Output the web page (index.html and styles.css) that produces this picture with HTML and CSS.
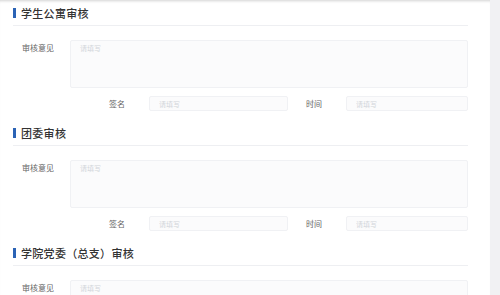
FILE: index.html
```html
<!DOCTYPE html>
<html lang="zh-CN">
<head>
  <meta charset="UTF-8" />
  <meta name="viewport" content="width=device-width, initial-scale=1" />
  <title>审核</title>
  <link rel="stylesheet" href="styles.css">
</head>
<body>
  <div class="panel">

    <section class="audit">
      <div class="audit-head"><span class="bar"></span><h2>学生公寓审核</h2></div>
      <div class="row-opinion">
        <label class="lbl">审核意见</label>
        <textarea class="area" placeholder="请填写"></textarea>
      </div>
      <div class="row-sign">
        <label class="lbl">签名</label>
        <input class="inp inp-name" placeholder="请填写" />
        <label class="lbl">时间</label>
        <input class="inp inp-time" placeholder="请填写" />
      </div>
    </section>

    <section class="audit">
      <div class="audit-head"><span class="bar"></span><h2>团委审核</h2></div>
      <div class="row-opinion">
        <label class="lbl">审核意见</label>
        <textarea class="area" placeholder="请填写"></textarea>
      </div>
      <div class="row-sign">
        <label class="lbl">签名</label>
        <input class="inp inp-name" placeholder="请填写" />
        <label class="lbl">时间</label>
        <input class="inp inp-time" placeholder="请填写" />
      </div>
    </section>

    <section class="audit">
      <div class="audit-head"><span class="bar"></span><h2>学院党委（总支）审核</h2></div>
      <div class="row-opinion">
        <label class="lbl">审核意见</label>
        <textarea class="area" placeholder="请填写"></textarea>
      </div>
    </section>

  </div>
</body>
</html>
```

FILE: styles.css
```css
:root {
  --blue: #2b63b5;
  --line: #eeeff2;
  --field-bg: #fbfbfc;
  --field-border: #f0f1f4;
  --text: #333;
  --label: #666;
  --placeholder: #d2d5da;
  --font-family: "Noto Sans CJK SC", "Noto Sans", sans-serif;
}

* {
  box-sizing: border-box;
}

html, body {
  height: 100%;
}

body {
  margin: 0;
  background: #f1f1f3;
  font-family: var(--font-family);
  overflow: hidden;
}

.panel {
  width: 490px;
  min-height: 100%;
  background: #fff;
  padding: 0 22px 0 13px;
  box-shadow: inset 0 3px 3px -2px rgba(0, 0, 0, 0.18);
}

.audit {
  padding-bottom: 9px;
}

.audit-head {
  display: flex;
  align-items: center;
  height: 26px;
  border-bottom: 1px solid var(--line);
}

.bar {
  width: 3px;
  height: 10px;
  background: var(--blue);
  margin-right: 5px;
}

.audit-head h2 {
  margin: 0;
  font-size: 11px;
  font-weight: 500;
  color: var(--text);
  letter-spacing: 0.3px;
}

.lbl {
  width: 57px;
  padding-right: 7px;
  text-align: center;
  font-size: 8px;
  color: var(--label);
  flex-shrink: 0;
}

.row-opinion {
  display: flex;
  margin-top: 14px;
}

.row-opinion .lbl {
  padding-top: 2px;
}

.area {
  width: 398px;
  height: 48px;
  resize: none;
  background: var(--field-bg);
  border: 1px solid var(--field-border);
  border-radius: 2px;
  padding: 2px 9px;
  font-family: var(--font-family);
  font-size: 7px;
  outline: none;
}

.row-sign {
  display: flex;
  align-items: center;
  margin-top: 8px;
  padding-left: 79px;
}

.inp {
  height: 15px;
  background: var(--field-bg);
  border: 1px solid var(--field-border);
  border-radius: 2px;
  padding: 0 9px;
  font-family: var(--font-family);
  font-size: 7px;
  outline: none;
}

.inp-name {
  width: 139px;
  margin-right: 1px;
}

.inp-time {
  width: 122px;
}

.area::placeholder,
.inp::placeholder {
  color: var(--placeholder);
}
```
